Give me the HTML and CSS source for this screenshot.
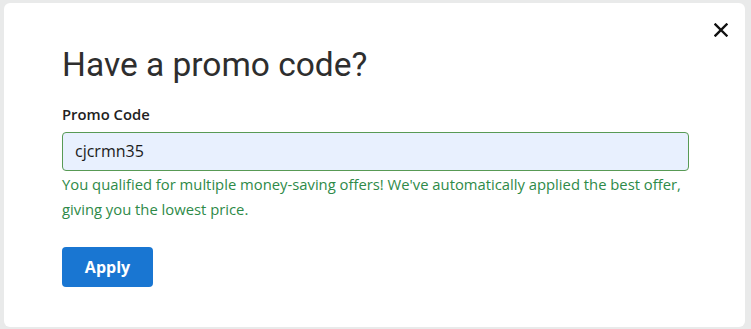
FILE: index.html
```html
<!DOCTYPE html>
<html>
<head>
<meta charset="utf-8">
<link rel="stylesheet" href="styles.css">
</head>
<body>
<div class="modal">
  <button class="close" aria-label="Close">
    <svg width="14" height="14" viewBox="0 0 14 14"><path d="M1.5 1.5 L12.5 12.5 M12.5 1.5 L1.5 12.5" stroke="#111" stroke-width="2.4" stroke-linecap="square"/></svg>
  </button>
  <h1 class="title">Have a promo code?</h1>
  <label class="label">Promo Code</label>
  <div class="input">cjcrmn35</div>
  <p class="help">You qualified for multiple money-saving offers! We've automatically applied the best offer, giving you the lowest price.</p>
  <button class="apply">Apply</button>
</div>
</body>
</html>
```
FILE: styles.css
```css
html, body {
  margin: 0;
  padding: 0;
  background: #e9eaea;
  width: 751px;
  height: 329px;
  overflow: hidden;
}
.modal {
  position: relative;
  box-sizing: border-box;
  margin: 3px 6px 0 4px;
  height: 324px;
  background: #fff;
  border-radius: 6px;
  padding: 36px 56px 0 58px;
  font-family: "Open Sans", sans-serif;
  color: #222;
}
.close {
  position: absolute;
  top: 20px;
  right: 17px;
  border: 0;
  background: none;
  padding: 0;
  width: 14px;
  height: 14px;
  display: flex;
}
.title {
  margin: 0;
  font-family: Roboto, sans-serif;
  font-weight: 400;
  font-size: 33.5px;
  line-height: 52px;
  color: #2e2e2e;
}
.label {
  display: block;
  margin-top: 12px;
  font-size: 14.8px;
  font-weight: 600;
  line-height: 22px;
  color: #222;
}
.input {
  box-sizing: border-box;
  margin-top: 7px;
  width: 627px;
  height: 39px;
  border: 1px solid #589a55;
  border-radius: 4px;
  background: #e8f0fe;
  padding: 0 12px;
  font-size: 16px;
  line-height: 37px;
  color: #1a1a1a;
}
.help {
  margin: 1px 0 0;
  font-size: 14.8px;
  line-height: 25px;
  color: #2e8a48;
  width: 640px;
}
.apply {
  margin-top: 25px;
  width: 91px;
  height: 40px;
  border: 0;
  border-radius: 4px;
  background: #1976d2;
  color: #fff;
  font-family: "Open Sans", sans-serif;
  font-weight: 700;
  font-size: 16px;
  padding: 0;
}
```
